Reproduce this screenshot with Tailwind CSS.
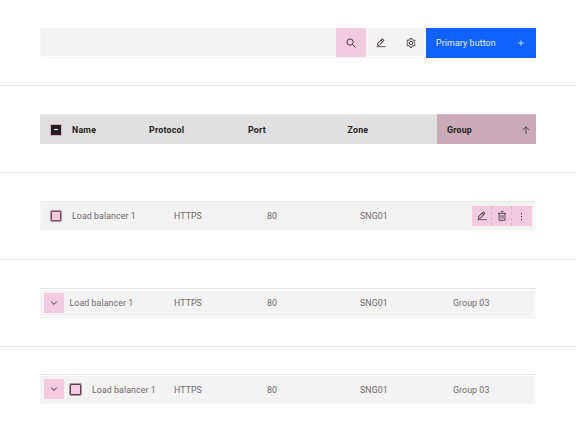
<!DOCTYPE html>
<html lang="en"><head><meta charset="utf-8"><title>Data table elements</title>
<script src="https://cdn.jsdelivr.net/npm/@tailwindcss/browser@4"></script></head>
<body class="w-[576px] h-[432px] overflow-hidden bg-white font-[Roboto,'Noto_Sans',sans-serif] text-[8.8px] leading-[12px] tracking-[.08px] text-[#6f686a]">
<svg class="hidden">
<symbol id="edit" viewBox="0 0 32 32"><path fill="currentColor" d="M2 27h28v2H2zM25.4 9a2 2 0 0 0 0-2.8l-3.6-3.6a2 2 0 0 0-2.8 0L4 17.6V24h6.4zM20.4 4 24 7.6l-3 3L17.400 7zM6 22v-3.600l10-10 3.600 3.600-10 10z"/></symbol>
<symbol id="chev" viewBox="0 0 8 8"><path fill="none" stroke="currentColor" stroke-width=".95" d="m1.200 2.600 2.800 2.800 2.800-2.800"/></symbol>
</svg>
<section class="h-[86px] border-b border-[#e8e8e8] pt-[28px] px-[40px]">
 <div class="flex h-[30px] w-[496px]">
  <div class="flex h-[30px] w-[386px] border-l border-b border-[#f7f7f7] pb-px">
   <div class="w-[295px] bg-[#f3f3f3]"></div>
   <div class="flex w-[30px] h-[29px] items-center justify-center bg-[#f4cbde] text-[#3d3438]"><svg class="size-[10px]" viewBox="0 0 16 16" fill="none" stroke="currentColor" stroke-width="1.500"><circle cx="6.500" cy="6.500" r="5"/><path d="m10.200 10.200 5 5"/></svg></div>
   <div class="flex w-[30px] items-center justify-center bg-[#f3f3f3] text-[#302b2d] pt-px"><svg class="size-[10px]" stroke="currentColor" stroke-width=".6"><use href="#edit"/></svg></div>
   <div class="flex w-[29px] items-center justify-center bg-[#f3f3f3] text-[#403a3c] pt-px"><svg class="size-[10px]" viewBox="0 0 20 20" fill="none" stroke="currentColor" stroke-width="1.900" stroke-linejoin="round"><path d="m8.300 1h3.400l.5 2.500 2 1.100 2.400-.8 1.700 3-1.900 1.600v2.900l1.900 1.700-1.700 3-2.400-.8-2 1.100-.5 2.500H8.300l-.5-2.500-2-1.100-2.400.8-1.700-3 1.900-1.700V8.400L1.700 6.800l1.700-3 2.400.8 2-1.100z"/><circle cx="10" cy="10" r="3.300"/></svg></div>
  </div>
  <div class="flex w-[110px] items-center justify-between bg-[#0f62fe] pl-[10px] pr-[12px] text-[#e7efff]"><span class="whitespace-nowrap tracking-[.13px]">Primary button</span><svg class="size-[6px]" viewBox="0 0 6 6" stroke="currentColor" stroke-width=".8"><path d="M3 .2v5.600M.2 3h5.600"/></svg></div>
 </div>
</section>
<section class="h-[87px] border-b border-[#e8e8e8] pt-[28px] px-[40px]">
 <div class="flex h-[30px] w-[496px] items-center border-t border-[#e8e8e8] bg-[#e0e0e0] font-bold tracking-[.22px] text-[#242022]">
  <div class="flex w-[32px] pl-[10px]"><div class="flex size-[12px] items-center justify-center border border-[#d5b0c0] bg-[#241f21]"><i class="h-px w-[4px] bg-white"></i></div></div>
  <div class="w-[77px]">Name</div><div class="w-[99px]">Protocol</div><div class="w-[99.500px]">Port</div><div class="w-[89.500px]">Zone</div>
  <div class="-mt-px flex h-[30px] w-[99px] items-center justify-between border-t border-[#d5bac6] bg-[#caabb7] pl-[10px] pr-[6px]"><span>Group</span><svg class="mt-px size-[8px]" viewBox="0 0 8 8" fill="none" stroke="#453b40" stroke-width=".9"><path d="M4 8V.8M.8 4 4 .8 7.200 4"/></svg></div>
 </div>
</section>
<section class="h-[87px] border-b border-[#e8e8e8] pt-[28px] px-[40px]">
 <div class="h-[30px] w-[496px] border border-[#ececec] border-l-[#f6f6f6] border-r-[#f6f6f6] border-b-[#f8f8f8] pr-px">
  <div class="flex h-[28px] items-center bg-[#f3f3f3]">
   <div class="flex w-[31px] pl-[9px]"><div class="size-[12px] bg-[#f4cbde] p-px"><div class="size-[10px] rounded-[1px] border border-[#65565e] outline-[.5px] outline-[#65565e]/50"></div></div></div>
   <div class="w-[102px]">Load balancer 1</div><div class="w-[93px]">HTTPS</div><div class="w-[93px]">80</div><div class="w-[112px]">SNG01</div>
   <div class="flex h-[20px] w-[60px] bg-[#f4cbde] text-[#302b2d]">
    <div class="flex w-[20px] items-center justify-center border-r border-dashed border-[#cdb9c2]"><svg class="size-[10px]" stroke="currentColor" stroke-width=".6"><use href="#edit"/></svg></div>
    <div class="flex w-[20px] items-center justify-center border-r border-dashed border-[#cdb9c2]"><svg class="size-[10px]" viewBox="0 0 10 10" fill="none" stroke="currentColor" stroke-width=".8"><path d="M1 2.400h8M3.500.7h3M2 2.400v6.900h6V2.400M4 4v3.700M6 4v3.700"/></svg></div>
    <div class="flex w-[19px] items-center justify-center"><svg class="size-[9px]" viewBox="0 0 9 9" fill="currentColor"><path d="M4 1h1v1.200H4zM4 4h1v1.200H4zM4 7h1v1.200H4z"/></svg></div>
   </div>
  </div>
 </div>
</section>
<section class="h-[87px] border-b border-[#e8e8e8] pt-[28px] px-[40px]">
 <div class="h-[30px] w-[496px] border border-[#e6e6e6] border-l-[#f6f6f6] border-r-[#f6f6f6] border-b-[#f0f0f0] pt-px pb-px pr-px">
  <div class="flex h-[26px] items-center bg-[#f3f3f3]">
   <div class="w-[28.500px] pl-[3.400px]"><div class="flex size-[20px] items-center justify-center bg-[#f4cbde] text-[#302b2d]"><svg class="size-[8px]"><use href="#chev"/></svg></div></div>
   <div class="w-[104.500px]">Load balancer 1</div><div class="w-[93px]">HTTPS</div><div class="w-[93px]">80</div><div class="w-[93px]">SNG01</div><div>Group 03</div>
  </div>
 </div>
</section>
<section class="h-[85px] pt-[27px] px-[40px]">
 <div class="h-[30px] w-[496px] border border-[#e6e6e6] border-l-[#f6f6f6] border-r-[#f6f6f6] border-b-[#f8f8f8] pt-px pr-px">
  <div class="flex h-[27px] items-center bg-[#f3f3f3]">
   <div class="w-[28px] pl-[3.400px]"><div class="-mt-px flex size-[20px] items-center justify-center bg-[#f4cbde] text-[#302b2d]"><svg class="size-[8px]"><use href="#chev"/></svg></div></div>
   <div class="w-[23px]"><div class="size-[13px] bg-[#f4cbde] p-px"><div class="size-[11px] rounded-[1px] border border-[#51444b] outline-[.5px] outline-[#51444b]/40"></div></div></div>
   <div class="w-[82px]">Load balancer 1</div><div class="w-[93px]">HTTPS</div><div class="w-[93px]">80</div><div class="w-[93px]">SNG01</div><div>Group 03</div>
  </div>
 </div>
</section>
</body></html>
